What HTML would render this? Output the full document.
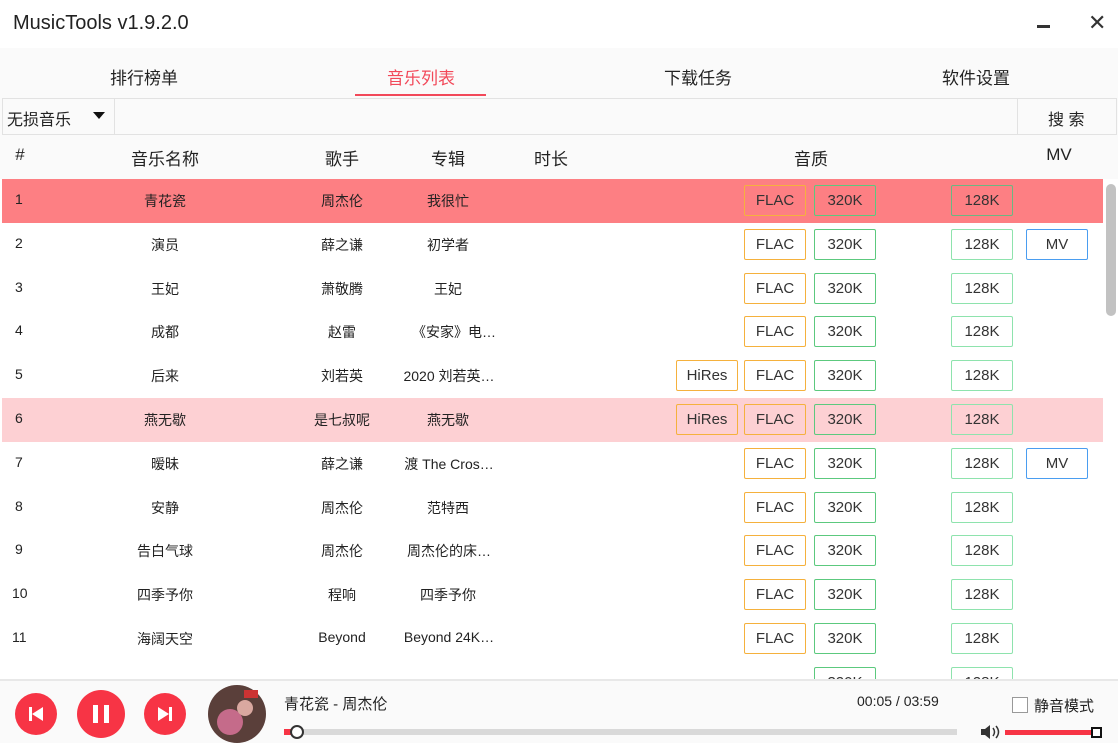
<!DOCTYPE html>
<html><head><meta charset="utf-8"><style>
*{margin:0;padding:0;box-sizing:border-box}
body{width:1118px;height:743px;overflow:hidden;background:#fff;font-family:"Liberation Sans","Noto Sans CJK SC",sans-serif;color:#222;position:relative}
.a{position:absolute}
.t{position:absolute;font-size:14px;white-space:nowrap;transform:translateX(-50%)}
.row{position:absolute;left:2px;width:1101px;height:44px}
.row .t{top:12px}
.b{position:absolute;top:6px;height:31px;border:1px solid;border-radius:2px;font-size:15px;text-align:center;line-height:29px;color:#333}
.fl{left:742px;width:62px;border-color:#f5b13d}
.k3{left:812px;width:62px;border-color:#5cc97e}
.k1{left:949px;width:62px;border-color:#8ee3ad}
.mv{left:1024px;width:62px;border-color:#4a9df0}
.hr{left:674px;width:62px;border-color:#f5b13d}
</style></head><body>
<div class="a" style="left:13px;top:12px;font-size:20px;color:#222">MusicTools v1.9.2.0</div>
<div class="a" style="left:1037px;top:25px;width:13px;height:3px;background:#333"></div>
<div class="a" style="left:1088px;top:10px;font-size:22px;color:#333">✕</div>
<div class="a" style="left:0;top:48px;width:1118px;height:632px;background:#fafafa"></div>
<div class="t" style="left:144px;top:64px;font-size:17px">排行榜单</div>
<div class="t" style="left:421px;top:64px;font-size:17px;color:#f2495a">音乐列表</div>
<div class="a" style="left:355px;top:94px;width:131px;height:2px;background:#f2495a"></div>
<div class="t" style="left:698px;top:64px;font-size:17px">下载任务</div>
<div class="t" style="left:976px;top:64px;font-size:17px">软件设置</div>
<div class="a" style="left:2px;top:98px;width:1115px;height:37px;border:1px solid #e2e2e2;background:#fafafa"></div>
<div class="a" style="left:114px;top:98px;width:1px;height:37px;background:#e2e2e2"></div>
<div class="a" style="left:1017px;top:98px;width:1px;height:37px;background:#e2e2e2"></div>
<div class="a" style="left:7px;top:106px;font-size:16px">无损音乐</div>
<div class="a" style="left:93px;top:112px;border-left:6px solid transparent;border-right:6px solid transparent;border-top:7px solid #111"></div>
<div class="a" style="left:1048px;top:106px;font-size:16px">搜 索</div>
<div class="t" style="left:20px;top:145px;font-size:17px">#</div>
<div class="t" style="left:165px;top:145px;font-size:17px">音乐名称</div>
<div class="t" style="left:342px;top:145px;font-size:17px">歌手</div>
<div class="t" style="left:448px;top:145px;font-size:17px">专辑</div>
<div class="t" style="left:551px;top:145px;font-size:17px">时长</div>
<div class="t" style="left:811px;top:145px;font-size:17px">音质</div>
<div class="t" style="left:1059px;top:145px;font-size:17px">MV</div>
<div class="a" style="left:0;top:179px;width:1104px;height:500px;overflow:hidden;background:#fff">
<div class="row" style="top:0;background:#fd7f83"><div class="a" style="left:13px;top:12px;font-size:14px">1</div><div class="t" style="left:163px">青花瓷</div><div class="t" style="left:340px">周杰伦</div><div class="t" style="left:446px">我很忙</div><div class="b fl">FLAC</div><div class="b k3">320K</div><div class="b k1" style="border-color:#6ab882">128K</div></div>
<div class="row" style="top:43.8px"><div class="a" style="left:13px;top:12px;font-size:14px">2</div><div class="t" style="left:163px">演员</div><div class="t" style="left:340px">薛之谦</div><div class="t" style="left:446px">初学者</div><div class="b fl">FLAC</div><div class="b k3">320K</div><div class="b k1">128K</div><div class="b mv">MV</div></div>
<div class="row" style="top:87.6px"><div class="a" style="left:13px;top:12px;font-size:14px">3</div><div class="t" style="left:163px">王妃</div><div class="t" style="left:340px">萧敬腾</div><div class="t" style="left:446px">王妃</div><div class="b fl">FLAC</div><div class="b k3">320K</div><div class="b k1">128K</div></div>
<div class="row" style="top:131.4px"><div class="a" style="left:13px;top:12px;font-size:14px">4</div><div class="t" style="left:163px">成都</div><div class="t" style="left:340px">赵雷</div><div class="t" style="left:452px">《安家》电…</div><div class="b fl">FLAC</div><div class="b k3">320K</div><div class="b k1">128K</div></div>
<div class="row" style="top:175.2px"><div class="a" style="left:13px;top:12px;font-size:14px">5</div><div class="t" style="left:163px">后来</div><div class="t" style="left:340px">刘若英</div><div class="t" style="left:447px">2020 刘若英…</div><div class="b hr">HiRes</div><div class="b fl">FLAC</div><div class="b k3">320K</div><div class="b k1">128K</div></div>
<div class="row" style="top:219px;background:#fdd0d3"><div class="a" style="left:13px;top:12px;font-size:14px">6</div><div class="t" style="left:163px">燕无歇</div><div class="t" style="left:340px">是七叔呢</div><div class="t" style="left:446px">燕无歇</div><div class="b hr">HiRes</div><div class="b fl">FLAC</div><div class="b k3">320K</div><div class="b k1">128K</div></div>
<div class="row" style="top:262.8px"><div class="a" style="left:13px;top:12px;font-size:14px">7</div><div class="t" style="left:163px">暧昧</div><div class="t" style="left:340px">薛之谦</div><div class="t" style="left:447px">渡 The Cros…</div><div class="b fl">FLAC</div><div class="b k3">320K</div><div class="b k1">128K</div><div class="b mv">MV</div></div>
<div class="row" style="top:306.6px"><div class="a" style="left:13px;top:12px;font-size:14px">8</div><div class="t" style="left:163px">安静</div><div class="t" style="left:340px">周杰伦</div><div class="t" style="left:446px">范特西</div><div class="b fl">FLAC</div><div class="b k3">320K</div><div class="b k1">128K</div></div>
<div class="row" style="top:350.4px"><div class="a" style="left:13px;top:12px;font-size:14px">9</div><div class="t" style="left:163px">告白气球</div><div class="t" style="left:340px">周杰伦</div><div class="t" style="left:447px">周杰伦的床…</div><div class="b fl">FLAC</div><div class="b k3">320K</div><div class="b k1">128K</div></div>
<div class="row" style="top:394.2px"><div class="a" style="left:10px;top:12px;font-size:14px">10</div><div class="t" style="left:163px">四季予你</div><div class="t" style="left:340px">程响</div><div class="t" style="left:446px">四季予你</div><div class="b fl">FLAC</div><div class="b k3">320K</div><div class="b k1">128K</div></div>
<div class="row" style="top:438px"><div class="a" style="left:10px;top:12px;font-size:14px">11</div><div class="t" style="left:163px">海阔天空</div><div class="t" style="left:340px">Beyond</div><div class="t" style="left:447px">Beyond 24K…</div><div class="b fl">FLAC</div><div class="b k3">320K</div><div class="b k1">128K</div></div>
<div class="row" style="top:481.8px"><div class="b k3">320K</div><div class="b k1">128K</div></div>
</div>
<div class="a" style="left:1104px;top:179px;width:14px;height:500px;background:#fff"></div>
<div class="a" style="left:1106px;top:184px;width:10px;height:132px;background:#c2c2c2;border-radius:5px"></div>
<div class="a" style="left:0;top:679px;width:1118px;height:64px;background:#fafafa;border-top:2px solid #e8e8e8"></div>
<svg class="a" style="left:0;top:680px" width="280" height="63">
<circle cx="36" cy="34" r="21" fill="#f73445"/><rect x="29" y="27" width="3" height="14" fill="#fff"/><path d="M43 27 L32 34 L43 41Z" fill="#fff"/>
<circle cx="101" cy="34" r="24" fill="#f73445"/><rect x="93" y="25" width="5" height="18" fill="#fff"/><rect x="104" y="25" width="5" height="18" fill="#fff"/>
<circle cx="165" cy="34" r="21" fill="#f73445"/><rect x="169" y="27" width="3" height="14" fill="#fff"/><path d="M158 27 L169 34 L158 41Z" fill="#fff"/>
<circle cx="237" cy="34" r="29" fill="#5a3f3a"/><circle cx="230" cy="42" r="13" fill="#c56b8a"/><rect x="244" y="10" width="14" height="8" fill="#c33"/><circle cx="245" cy="28" r="8" fill="#d9a8a0"/>
</svg>
<div class="a" style="left:284px;top:693px;font-size:15px">青花瓷 - 周杰伦</div>
<div class="a" style="left:857px;top:693px;font-size:14px">00:05 / 03:59</div>
<div class="a" style="left:284px;top:729px;width:673px;height:6px;background:#d9d9d9"></div>
<div class="a" style="left:284px;top:729px;width:10px;height:6px;background:#f73445"></div>
<div class="a" style="left:290px;top:725px;width:14px;height:14px;border:2px solid #333;border-radius:50%;background:#fff"></div>
<div class="a" style="left:1012px;top:697px;width:16px;height:16px;border:1px solid #999;background:#fff"></div>
<div class="a" style="left:1034px;top:695px;font-size:15px">静音模式</div>
<svg class="a" style="left:980px;top:723px" width="22" height="18"><path d="M1 6h4l5-4v14l-5-4H1z" fill="#333"/><path d="M13 5q3 4 0 8M16 3q5 6 0 12" stroke="#333" stroke-width="1.5" fill="none"/></svg>
<div class="a" style="left:1005px;top:730px;width:90px;height:5px;background:#f73445"></div>
<div class="a" style="left:1091px;top:727px;width:11px;height:11px;border:2px solid #111;background:#fff"></div>
</body></html>
